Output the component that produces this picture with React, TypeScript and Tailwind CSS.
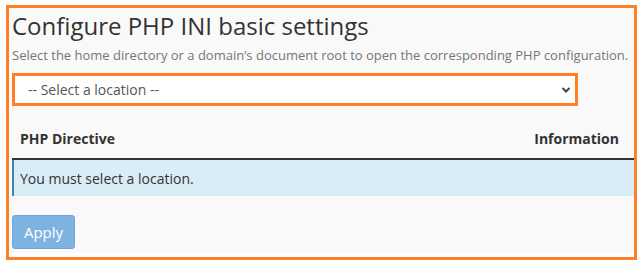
import React from "react";

export default function App() {
  return (
    <div className="w-[643px] h-[265px] bg-white pt-[5px] pl-[6px] font-['Open_Sans',sans-serif]">
      <div className="w-[631px] h-[255px] border-[3px] border-[#ff7f27] bg-white">
        <div className="h-[245px] bg-[#f9f9f9] pt-[3px] pl-[3px]">
          <h1 className="text-[24px] leading-[30px] text-[#333]">Configure PHP INI basic settings</h1>
          <p className="mt-[5px] text-[13px] leading-[18px] text-[#767676]">
            Select the home directory or a domain’s document root to open the corresponding PHP configuration.
          </p>

          <div className="mt-[9px] w-[566px] h-[33px] border-[3px] border-[#ff7f27] bg-white flex items-center justify-between pl-[13px] pr-[4px]">
            <span className="text-[14px] text-[#555]">-- Select a location --</span>
            <svg width="10" height="8" viewBox="0 0 10 8" className="text-[#444]">
              <path d="M1.5 2 L5 5.5 L8.5 2" fill="none" stroke="currentColor" strokeWidth="2" />
            </svg>
          </div>

          <div className="mt-[22px]">
            <div className="flex justify-between items-end px-[8px] pb-[9px] border-b-2 border-[#333] text-[14px] font-bold text-[#333]">
              <span>PHP Directive</span>
              <span className="mr-[7px]">Information</span>
            </div>
            <div className="h-[36px] flex items-center bg-[#d9edf7] border-l-2 border-[#3a87ad] pl-[6px] text-[14px] text-[#333]">
              You must select a location.
            </div>
          </div>

          <button className="mt-[19px] w-[63px] h-[34px] rounded-[3px] bg-[#7eb3e1] border border-[#6da6d8] text-white text-[15px]">
            Apply
          </button>
        </div>
      </div>
    </div>
  );
}
